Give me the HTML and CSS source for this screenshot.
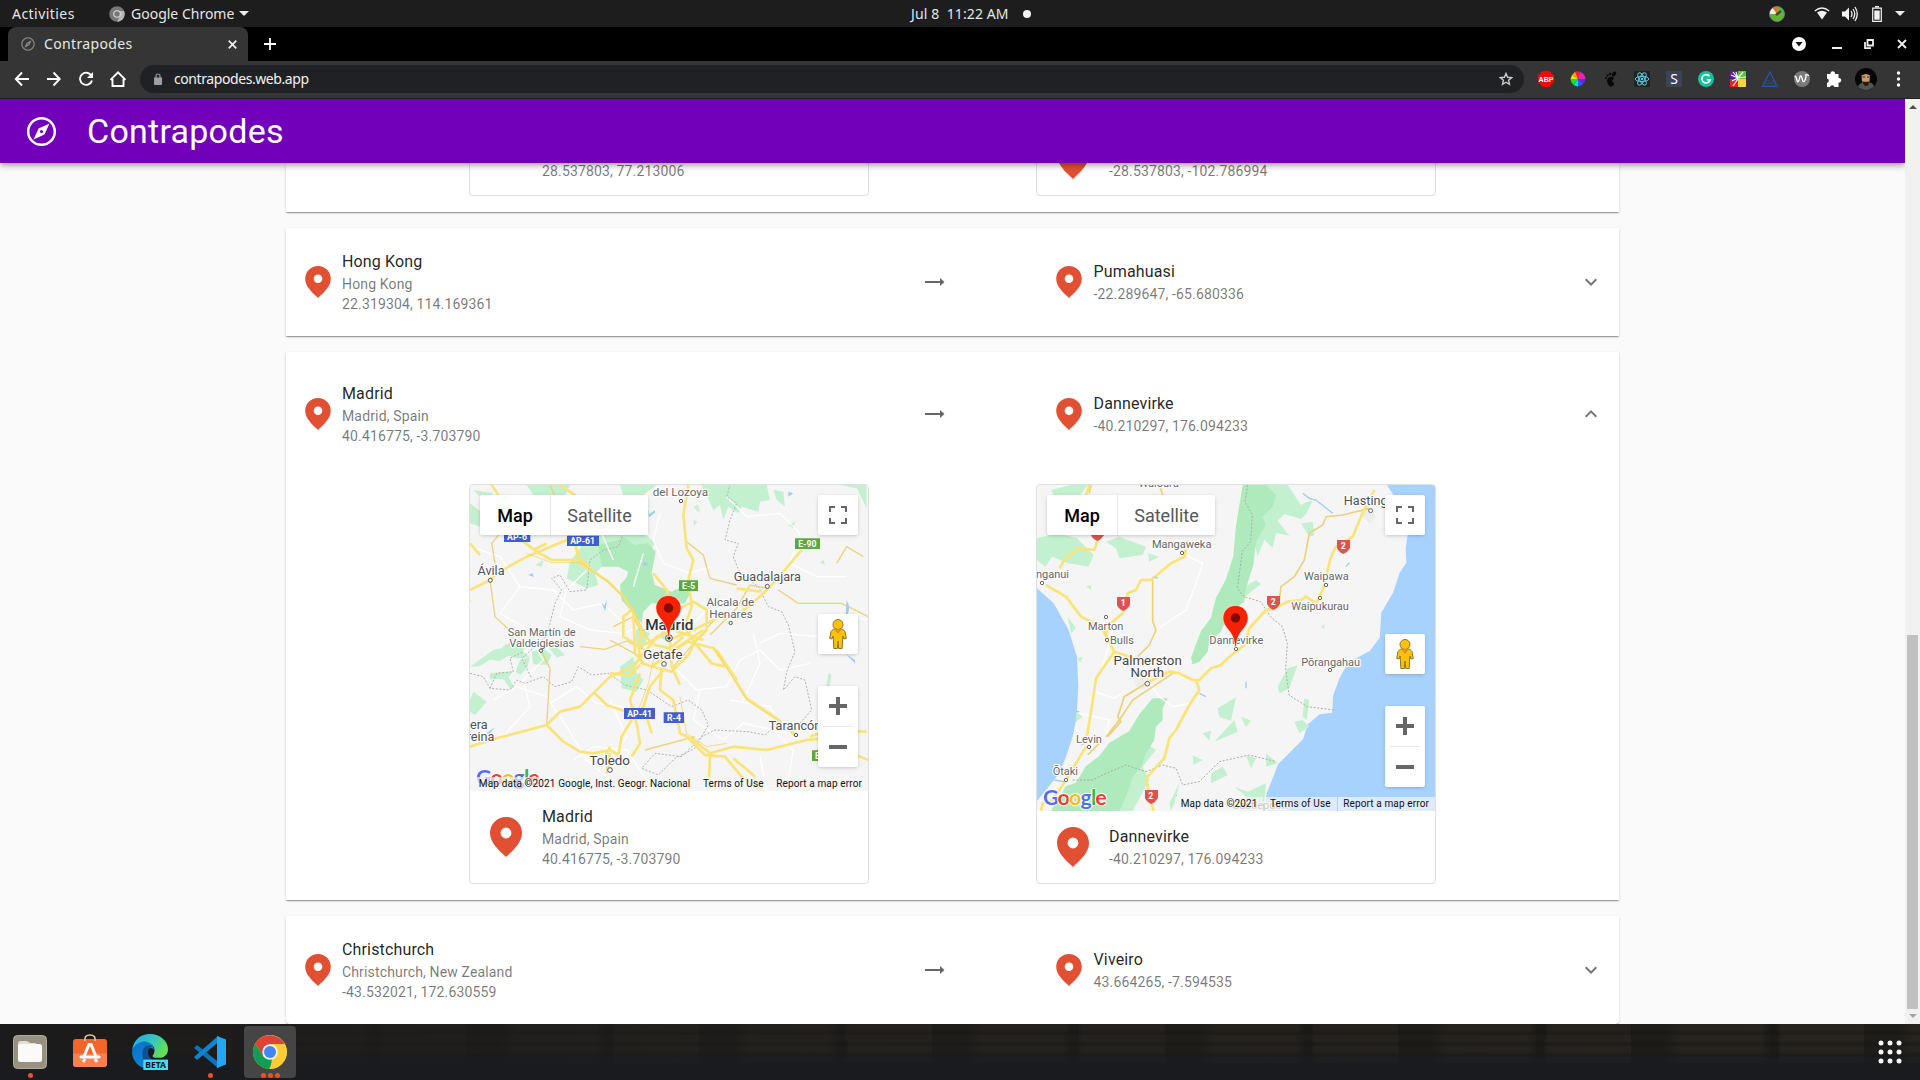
FILE: index.html
```html
<!DOCTYPE html>
<html lang="en">
<head>
<meta charset="utf-8">
<title>Contrapodes</title>
<link rel="stylesheet" href="styles.css">
</head>
<body>
<svg class="defs" width="0" height="0">
  <symbol id="pin" viewBox="0 0 32 40"><path fill="#e25033" fill-rule="evenodd" d="M16 0C7 0 0 7 0 16c0 9.500 8.500 17 16 24 7.500-7 16-14.500 16-24C32 7 25 0 16 0zm0 10.600a5.400 5.400 0 1 1 0 10.800 5.400 5.400 0 0 1 0-10.800z"/></symbol>
  <symbol id="arrow" viewBox="0 0 24 24"><path fill="#666" d="M2 11h15V8l4.500 4-4.500 4v-3H2z"/></symbol>
  <symbol id="more" viewBox="0 0 24 24"><path fill="#757575" d="M16.590 8.590L12 13.170 7.410 8.590 6 10l6 6 6-6z"/></symbol>
  <symbol id="compass" viewBox="0 0 24 24"><path fill="currentColor" d="M12 2C6.480 2 2 6.480 2 12s4.480 10 10 10 10-4.480 10-10S17.520 2 12 2zm0 18.300c-4.600 0-8.300-3.700-8.300-8.300S7.400 3.700 12 3.700s8.300 3.700 8.300 8.300-3.700 8.300-8.300 8.300z"/><path fill="currentColor" fill-rule="evenodd" d="M6.500 17.500l7.510-3.490L17.500 6.500 9.990 9.990 6.500 17.500zM12 10.900a1.100 1.100 0 1 1 0 2.200 1.100 1.100 0 0 1 0-2.200z"/></symbol>
  <symbol id="full" viewBox="0 0 18 18"><path fill="#666" d="M0 0v6h2V2h4V0H0zm16 0h-4v2h4v4h2V0h-2zm0 16h-4v2h6v-6h-2v4zM2 12H0v6h6v-2H2v-4z"/></symbol>
  <symbol id="pegman" viewBox="0 0 18 30"><g stroke="#8a7434" stroke-width="1"><path fill="#fbc206" d="M4.500 10h9l2.500 2.500 1.300 7-2.300.5-1.200-3-.6 12.500H9.700L9 22l-.7 7.500H4.800L4.200 17 3 20l-2.300-.5 1.300-7z"/><circle cx="9" cy="5.500" r="5" fill="#fbc206"/></g><path fill="#e58f1b" d="M5 10h8l-4 5z"/></symbol>
  <symbol id="marker" viewBox="0 0 27 43"><path fill="#f62302" stroke="#fff" stroke-width=".6" d="M13.500.5C6.200.5.900 6 .9 13c0 5 2.500 8.200 5.600 12 3.500 4.300 5.800 8.600 6.400 17h1.200c.6-8.400 2.900-12.700 6.400-17 3.100-3.800 5.600-7 5.600-12C26.100 6 20.800.5 13.500.5z"/><circle cx="13.500" cy="13" r="4.700" fill="#820b05"/></symbol>
</svg>

<div class="topbar">
  <span class="activities">Activities</span>
  <span class="app"><svg width="16" height="16" viewBox="0 0 16 16"><circle cx="8" cy="8" r="7.800" fill="#777"/><path fill="#b8b8b8" d="M15 5H8l3.200 5L8 15.800A7.800 7.800 0 0 0 15 5z"/><circle cx="8" cy="8" r="3.800" fill="#ddd"/><circle cx="8" cy="8" r="2.800" fill="#777"/></svg><span class="appname">Google Chrome</span><i class="caret"></i></span>
  <span class="clock">Jul 8&nbsp; 11:22 AM</span><i class="dot"></i>
  <div class="tray">
    <svg class="t-gauge" width="16" height="16" viewBox="0 0 16 16"><circle cx="8" cy="8" r="7.500" fill="#5db92f" stroke="#777"/><path fill="#eee" d="M8 8H1a7 7 0 0 1 3-6z"/><path fill="#f46a2a" d="M8 8L4 2.200A7 7 0 0 1 8 1z"/><path stroke="#444" stroke-width="2.500" d="M7 9l5-4"/></svg>
    <svg class="t-wifi" width="16" height="13" viewBox="0 0 16 13"><path fill="#f2f2f2" d="M3 5.500Q8 2 13 5.500L8 12.500z"/><path fill="none" stroke="#f2f2f2" stroke-width="1.300" d="M.8 4Q8-2 15.200 4"/></svg>
    <svg class="t-vol" width="16" height="16" viewBox="0 0 16 16"><path fill="#f2f2f2" d="M0 5.500h3L7 1.500v13l-4-4H0z"/><path fill="none" stroke="#f2f2f2" stroke-width="1.300" d="M9 5q2 3 0 6M11 3q3.500 5 0 10M13 1q4.500 7 0 14"/></svg>
    <svg class="t-bat" width="10" height="16" viewBox="0 0 10 16"><path fill="none" stroke="#f2f2f2" stroke-width="1.200" d="M.7 2.200h8.600v13.100H.7zM3 .7h4"/><path fill="#f2f2f2" d="M2.300 4.500h5.400v9.200H2.300z"/></svg>
    <i class="caret t-caret"></i>
  </div>
</div>

<div class="tabstrip">
  <div class="tab"><svg class="fav" width="16" height="16"><use href="#compass"/></svg><span>Contrapodes</span><svg class="close" width="9" height="9" viewBox="0 0 9 9"><path stroke="#eee" stroke-width="1.700" d="M.7.7l7.600 7.600M8.300.7L.7 8.300"/></svg></div>
  <svg class="newtab" width="12" height="12" viewBox="0 0 12 12"><path stroke="#fff" stroke-width="1.800" d="M6 0v12M0 6h12"/></svg>
  <svg class="wincontrols" width="116" height="14" viewBox="0 0 116 14"><circle cx="7" cy="7" r="7" fill="#fff"/><path fill="#111" d="M3.500 5h7L7 9.500z"/><path stroke="#eee" stroke-width="2" d="M40 11h10"/><path fill="none" stroke="#eee" stroke-width="1.800" d="M75.500 3h5.500v5.500h-5.500zM73 5v6.200h6"/><path stroke="#eee" stroke-width="1.900" d="M106 3l8 8M114 3l-8 8"/></svg>
</div>

<div class="toolbar">
  <svg class="nav" width="112" height="18" viewBox="0 0 112 18"><g fill="none" stroke="#fff" stroke-width="1.900"><path d="M15 9H2M8 2.500L1.800 9 8 15.500M33 9h13M39.500 2.500L45.700 9l-6.200 6.500M77.300 5.500A6.100 6.100 0 1 0 78 10.500M98.500 9v7h11V9M96.500 9.800L104 2.300l7.500 7.500"/></g><path fill="#fff" d="M79 2v6h-6z"/></svg>
  <div class="urlbar"><svg width="8" height="12" viewBox="0 0 8 12"><path fill="#9aa0a6" d="M0 4.500h8V11q0 1-1 1H1q-1 0-1-1z"/><path fill="none" stroke="#9aa0a6" stroke-width="1.200" d="M2 5V3a2 2 0 0 1 4 0v2"/></svg><span class="url">contrapodes.web.app</span><svg class="star" width="14" height="14" viewBox="0 0 14 14"><path fill="none" stroke="#ccc" stroke-width="1.400" d="M7 1.500l1.600 3.800 4.100.3-3.100 2.700.9 4L7 10.200l-3.500 2.100.9-4L1.300 5.600l4.100-.3z"/></svg></div>
  <svg class="ext" width="372" height="22" viewBox="0 0 372 22">
    <path fill="#ee0b0b" d="M6.700 3h6.600l4.700 4.600v6.500L13.300 19H6.700L2 14.100V7.600z"/><text class="abp" x="10" y="13.700">ABP</text>
    <path fill="#ff2020" d="M42 11l-3-7.300a8 8 0 0 1 5 0z"/><path fill="#ffa000" d="M42 11l-6-4 3-3.300z"/><path fill="#e8e600" d="M42 11l-7.500 0 1.500-4z"/><path fill="#20dd20" d="M42 11l-4.500 6a8 8 0 0 1-3-6z"/><path fill="#00dfcf" d="M42 11v7.500a8 8 0 0 1-4.500-1.500z"/><path fill="#2060f0" d="M42 11l5 5a8 8 0 0 1-5 2.500z"/><path fill="#7020f0" d="M42 11h7.500a8 8 0 0 1-2.500 5z"/><path fill="#f020c0" d="M42 11l2-7.300q5 2 5.500 7.300z"/>
    <g fill="#080808"><ellipse cx="78" cy="6" rx="2.800" ry="1.800" transform="rotate(-50 78 6)"/><circle cx="74" cy="6" r="1.300"/><circle cx="71.500" cy="7.500" r="1.100"/><circle cx="70" cy="10" r="1"/><path d="M77 9c-4-1-7 2-5.500 6 1.500 5 6 4 6.500 1 .3-2-2.500-2-2-3 .8-1.500 3-3 1-4z"/></g>
    <path fill="#222" d="M98 3h16v16H98z"/><g fill="none" stroke="#61c5e8"><ellipse cx="106" cy="11" rx="6.800" ry="2.600"/><ellipse cx="106" cy="11" rx="6.800" ry="2.600" transform="rotate(60 106 11)"/><ellipse cx="106" cy="11" rx="6.800" ry="2.600" transform="rotate(120 106 11)"/></g><circle cx="106" cy="11" r="1.300" fill="#61c5e8"/>
    <path fill="#3c4257" d="M130 3h16v16h-16z"/><text class="ext-s" x="138" y="16.300">S</text>
    <circle cx="170" cy="11" r="8" fill="#15c39a"/><path fill="none" stroke="#fff" stroke-width="1.600" d="M173.500 8.300a4.200 4.200 0 1 0 .7 3.500h-3.400"/>
    <path fill="#5a1e9c" d="M194 3h8v8h-8z"/><path fill="#5fc52e" d="M202 3h8v8h-8z"/><path fill="#ef1c1c" d="M194 11h8v8h-8z"/><path fill="#f4d63a" d="M202 11h8v8h-8z"/><path stroke="#fff" stroke-width="1.200" d="M202 10l-7-3M202 10l-2-6M202 10l5-6M202 10l8-1M202 11l-5 7M202 10l-6 3M197 4l4 5"/>
    <path fill="none" stroke="#2158b5" stroke-width="1.200" d="M234 4l-7.500 14H241zM226 18.300h13"/><circle cx="240.500" cy="17.500" r="1.400" fill="#353535" stroke="#2158b5"/><text class="clk" x="234" y="15.500">CLK</text>
    <circle cx="266" cy="11" r="8" fill="#7b7b7b"/><path fill="none" stroke="#fff" stroke-width="1.300" d="M258.500 8.500q1.500-1 2.200 3 1 4.500 2.600 0l.7-3q1.500-2 2.200 2.500 1 5 3 .5 1.500-3.500.5-4.500 2-1 3 1"/>
    <path fill="#fff" d="M291 6h3.500a2.300 2.300 0 1 1 4.500 0h3.500v4a2.300 2.300 0 1 1 0 4.500V19h-4a2.300 2.300 0 0 0-4.500 0H291v-4a2.300 2.300 0 0 0 0-4.500z"/>
    <circle cx="330" cy="11" r="11" fill="#050505"/><path fill="#50555c" d="M322 18.500q2-4 6-4h5q4 0 5 4a11 11 0 0 1-16 0z"/><path fill="#c89b6b" d="M325.500 7.500q4.500-3 8.500 0l-.5 6q-1 4-3.700 4t-3.800-4z"/><path fill="#2b1c12" d="M326 12.500q1 5.500 4 5.500t3.500-5.500q-1 1.500-2 1.200h-3.500q-1.200 0-2-1.200z"/><path stroke="#3a2618" d="M326.500 9h2.500M331 9h2.500"/>
    <g fill="#fff"><circle cx="362.500" cy="5" r="1.700"/><circle cx="362.500" cy="11" r="1.700"/><circle cx="362.500" cy="17" r="1.700"/></g>
  </svg>
</div>

<div class="viewport">
  <div class="page">
    <header class="appbar"><svg width="35" height="35"><use href="#compass"/></svg><h1>Contrapodes</h1></header>
    <main class="list">
      <section class="panel panel-cut">
        <div class="details">
          <article class="place cut"><footer class="foot"><div class="icon-gap"></div><div class="info"><p>28.537803, 77.213006</p></div></footer></article>
          <article class="place cut"><footer class="foot"><svg class="bigpin" width="32" height="40"><use href="#pin"/></svg><div class="info"><p>-28.537803, -102.786994</p></div></footer></article>
        </div>
      </section>

      <section class="panel">
        <div class="summary">
          <div class="from"><svg class="pin" width="26" height="32"><use href="#pin"/></svg><div class="info"><h2>Hong Kong</h2><p>Hong Kong</p><p>22.319304, 114.169361</p></div></div>
          <svg class="arrow" width="24" height="24"><use href="#arrow"/></svg>
          <div class="to"><svg class="pin" width="26" height="32"><use href="#pin"/></svg><div class="info"><h2>Pumahuasi</h2><p>-22.289647, -65.680336</p></div></div>
          <svg class="chev" width="24" height="24"><use href="#more"/></svg>
        </div>
      </section>

      <section class="panel">
        <div class="summary open">
          <div class="from"><svg class="pin" width="26" height="32"><use href="#pin"/></svg><div class="info"><h2>Madrid</h2><p>Madrid, Spain</p><p>40.416775, -3.703790</p></div></div>
          <svg class="arrow" width="24" height="24"><use href="#arrow"/></svg>
          <div class="to"><svg class="pin" width="26" height="32"><use href="#pin"/></svg><div class="info"><h2>Dannevirke</h2><p>-40.210297, 176.094233</p></div></div>
          <svg class="chev up" width="24" height="24"><use href="#more"/></svg>
        </div>
        <div class="details">
          <article class="place">
            <div class="map">
              <svg class="tiles" viewBox="30 45 1194 918">
                <g fill="#c3f1cf">
                  <path d="M725 45l35 75 20-15 10 45 15-40 30 20 10-20 50 15 5-30 30-5-10-45zM860 45l10 50 40-15 5-35zM940 60l30 5 5 45-25-20zM985 165l20-10-5 20zM700 110l15-5 5 25zM1140 45l50 10 30 60V45zM200 45l40 60 30 10 40-25 20-45zM480 45l20 60 70 30-20-60 40-30zM30 100l40 30-10 40-30-10zM40 60l60 10-20 30z"/>
                  <path d="M330 275l60-80h170l25 25-40 60-60-5-60 15-20 20 10 35-35 10-60-30z"/>
                  <path d="M480 590l40-30 10 50 20 20-20 35-45-10zM530 470l40 20-25 50-20-30z"/>
                  <path d="M30 590l70-50 25-5 12-14 18 10 20-10 22 8-8 16 20 16-35 4-30-8-25 16-30-4-30 20zM215 545l35-10 25 20-15 30-40-2zM265 530l30 5 20 20-25 8zM90 610l70-6-15 18 20 35-15-2-20-28-40 0zM30 690l10-25 40 30-35 40-15-10zM180 570l30-8-8 30-20 22-15-8zM1105 610l10 5-10 50-8-5zM600 500l30-10-5 30z"/>
                  <path d="M225 285l25-15-5 20zM1080 280l10-12 5 15zM700 150l12 5-10 12z"/>
                </g>
                <g fill="#aeeabb">
                  <path d="M415 225l80-20 30 20 40-5 22 25-12 65-50 10-35 30 15-45-30-15-50 0z"/>
                  <path d="M480 345l35-40 60 5 10 35 50 20 40-20 20 15-20 40-50 5-50-5-25 25-5 35-60-70z"/>
                </g>
                <g fill="none" stroke="#fff" stroke-width="4">
                  <path d="M30 230l90 30 60 90 100 10 60 60 90-20 60 60M180 350l-60 80 70 40 60 100-60 60 20 80-90 100M100 690l70-40 90 30 60 90 60 100 70 60M270 700l80-50 60 50 80 10M380 300l-60 60-20 80 90 40 100 10 50-20M600 130l-20 80 30 70 80 30 60-20M650 600l60 60 90-10 40-80 60-30 60 60 90-20M720 660l-20 90 90 60 60-50 90 20 60 60-20 120M800 80l60 60 100-10 60 60-30 90 80 40 90 0M900 520l60-30 120 10 60-70 80 20M850 690l50-110-20-90M680 480l60-60 90-10M450 690l50 110-40 60M340 870l60-40 100 10 60 90M900 860l20 100M980 800l-50-90-120-20M460 270l-40-90 60-80M550 250l-30 100"/>
                </g>
                <g fill="none" stroke="#b0b0b0" stroke-width="3" stroke-dasharray="6 5">
                  <path d="M30 610l40 10 20 35 60 5 20-30 25 10 55-20 35 30 50-15 20-45 40 25 50-5 50 35 65 15 75 50 50-20 40 30 20 45-40 70-60 30-50 50-50-20 40-45 80 10 60-60 40-20 100 5 50 10 40-35 60 5 40-45-20-90-30-10-35 40 10-55 25-60-20-80-20-40-40-15-30-60-55-40-20-50 15-40-40-10 15-60 20-50-30-20 20-70M490 190l-15 40-45 10-40 30-10 90-50 5-30-50-25 10 30 35-20 40-25 100-30 25-45 40 30 60M90 655l20-45 50-5-10-40 40-20"/>
                </g>
                <g fill="none" stroke="#edd17b" stroke-width="4"><path d="M90 330l15 110 55 50-15 40M105 280l-10-60 25-30M1130 280l30-50 50 30M270 45l30 70M600 480h-60l-20-40-60 30M360 530l75 8 65-25 60 30M245 545l25 50-10 170M680 215l50 40 20 70 80 20M540 560l-90-50M705 800l-150 40M955 360l60 40 130 0 80 40M920 355l-50-10-40 70-80 80M640 590l140-160"/></g>
                <g fill="none" stroke="#fae377" stroke-width="8" stroke-linejoin="round">
                  <path d="M30 360l60-30 20-20 90-50 120-50 30-50M170 200l60 45 45 25 90 0 30 30 50 35 50 50 30 50 25 60 35 30 45 10 40-35M260 220l-40 20M345 220l15 60 30 20M1025 240l-80 95-40 40-60 50-75 20-70 35-75 30M30 830l80-25 150-40 40-40 60-15 40-40 50-50 70-30 70-90 40-15M260 765l50 50 50 30 40 5 50-10 25 15M475 855l10-55 30-50 35-40 20-60 40-50M515 860l25-40-10-60-20-70 30-80M560 740l15 50M450 610l60 5 30-30M405 670l35 35 60 20M630 510l5 80 25 55M605 600l-5 60 40 30 20 100 40 20 50 40 70-20 100 10 120-30 50-5 60 35 100 40M675 795l60 60 60 5 50 60 60 45M750 860l-5 100M820 865l60 50 30 50M1010 800l-60-55-90-60-50-80-50-70-75-20-50 30-60 45M770 540l60 90M685 45l-15 90 10 100 20 35-15 60 10 80-20 60 30 50 50 60 40 10M580 310l40 50 10 40 10 40-40 60-60 30-50-30 0-60 30-25M545 480l-10 50 10 50 50 15 40 10 50-50 20-40 35-35 0-60-40-25-60 30-30 60M520 430l5 120 30 35M640 480l90 30M610 560l120-80M450 850l-10 60M900 365l-70-10M30 220l30 35M1220 785l-120-5-50 20M30 390l-10 20M95 45l20 30M300 45l60 40M420 890l30-60"/>
                </g>
                <g fill="none" stroke="#efd05f" stroke-width="2"><path d="M200 250l75 28 90 0 35 28 50 35 50 50 30 50 30 60M660 680l20 110 60 40 60-10M580 570l-15 70-30 80M760 530l50 80 50 80 90 60"/></g>
                <path fill="#9fcaff" d="M565 135l20-15v8l-18 14zM545 285l10-10 10 12zM423 395l10 12 8-18-5 35zM1160 390l8 20-8 50-4-10zM1155 550l30 20v10zM985 65l15 5-15 10zM78 790l28-18-18 20zM205 315l12-6 4 12zM1040 367l20 25zM308 900l10 12z"/>
                <g class="city mid"><text x="661" y="77" class="w">del Lozoya</text><text x="93" y="316" class="c2">Ávila</text><text x="922" y="334" class="c2">Guadalajara</text><text x="811" y="408" class="w">Alcala de</text><text x="813" y="444" class="w">Henares</text><text x="245" y="497">San Martín de</text><text x="245" y="530">Valdeiglesias</text><text x="609" y="566" class="c3">Getafe</text><text x="449" y="884" class="c3">Toledo</text><text x="1005" y="780" class="c2">Tarancón</text></g>
                <g class="city c2"><text x="30" y="776">era</text><text x="20" y="814">reina</text></g>
                <g fill="#fff" stroke="#555" stroke-width="3"><circle cx="663" cy="93" r="5"/><circle cx="91" cy="331" r="6"/><circle cx="922" cy="349" r="6"/><circle cx="812" cy="459" r="5"/><circle cx="243" cy="542" r="5"/><circle cx="612" cy="582" r="7"/><circle cx="450" cy="900" r="7"/><circle cx="1008" cy="795" r="5"/><circle cx="627" cy="504" r="10"/></g><circle cx="627" cy="504" r="5" fill="#222"/>
                <text class="capital" x="628" y="480">Madrid</text>
                <g fill="#4160cb"><path d="M132 185h79v31h-79zM321 197h96v31h-96zM492 714h93v33h-93zM611 727h61v32h-61z"/></g>
                <g fill="#5caa3c"><path d="M1005 205h75v32h-75zM657 331h57v32h-57zM1056 841h60v32h-60z"/></g>
                <g class="shield"><text x="171" y="211">AP-6</text><text x="368" y="222">AP-61</text><text x="539" y="740">AP-41</text><text x="642" y="753">R-4</text><text x="1042" y="231">E-90</text><text x="686" y="357">E-5</text><text x="1072" y="867">E</text></g>
              </svg>
              <svg class="marker mk1" width="27" height="43"><use href="#marker"/></svg>
              <div class="types"><b>Map</b><span>Satellite</span></div>
              <div class="ctl fs"><svg width="18" height="18"><use href="#full"/></svg></div>
              <div class="ctl peg"><svg width="18" height="30"><use href="#pegman"/></svg></div>
              <div class="zoombox"><i class="plus"></i><hr><i class="minus"></i></div>
              <div class="logo"><span class="gb">G</span><span class="gr">o</span><span class="gy">o</span><span class="gb">g</span><span class="gg">l</span><span class="gr">e</span></div>
              <div class="attrib"><span>Map data ©2021 Google, Inst. Geogr. Nacional</span><span>Terms of Use</span><span>Report a map error</span></div>
            </div>
            <footer class="foot"><svg class="bigpin" width="32" height="40"><use href="#pin"/></svg><div class="info"><h2>Madrid</h2><p>Madrid, Spain</p><p>40.416775, -3.703790</p></div></footer>
          </article>

          <article class="place">
            <div class="map">
              <svg class="tiles" viewBox="33 45 1194 978">
                <path fill="#a8d2fe" d="M1083 45h144v978H718l3-50 35-90 75-75 15-45 35-30 38-5 2-50 20-55 25-45 65-35 30-40 5-75 35-60 20-60 20-30-2-45 8-50-8-60-35-45zM33 355l50 45 45 80 25 80 4 90-5 90-12 60-20 60-20 50-32 40-45 55z"/>
                <g fill="#c3f1cf">
                  <path d="M650 45h135l40 60 15-8 20-5-20 40-15 15-50-15-20 20 35 45-40-8-10 45-25-25-20 50-10-40-35 20zM33 205l60-15 60 15 50 50-15 35-60-10-50-20-20 30-25-20zM240 215l40-15 80 30-10 25-70 10-10-30zM365 250l35 10-30 15zM75 60l60-15h50l-30 40-60 10zM125 440l25 35-15 15zM180 350l15-5v15z"/>
                  <path d="M825 160l35-5 5 40-15 5zM755 650l30-55 30-10-25 70-30 15zM575 715l55-33-15 70-35-10zM625 750l10 35-70 30zM645 740l30 12-15 20zM530 790l25-8-5 30zM500 855l30 15-28 15zM555 910l35-20 15 25-50 25zM835 685l15 5-8 60-12-10zM805 755l25-5 20 20-30 20zM660 855l30 10-15 30zM720 850l35 30-35 10zM625 950l40 15 55-25-5 60-50 5-10-30zM430 1000l30-60-10 50-15 33zM150 725l20 15-20 15zM155 565l15-5-8 20zM640 1000l50-15-10 38h-40zM885 470l10-8v15zM640 360l50-30 15 12-50 40zM360 820l30 20-40 50 20 40-50 93h-60l60-120z"/>
                </g>
                <g fill="#aeeabb"><path d="M650 45h70l30 30-10 35-30 30 10 25-30 50-8 70-22 70-5 40-50 40-20 50-35 30-5 30-25 30-20 8-5-20 30-80 30-40 15-60 30-55 22-70 8-90zM380 685l45 0-15 30 0 35-20 20-5 40-25 40-15 40-25 30-20 60-20 43H75l45-75 30-10 30-50 40-30 30-40 60-35 30-50z"/></g>
                <path fill="#ededed" d="M330 610l40 5-5 35-25 10-15-20zM1000 130l30-15 20 25-20 20z"/>
                <g fill="none" stroke="#fff" stroke-width="4"><path d="M470 250l60 30-20 60-30 80-90 60M370 640l30 40 40 30 50-10M205 665l60 20 30-20M160 730l90 20-10 50M260 480l-30 110"/></g>
                <g fill="none" stroke="#aaa" stroke-width="3" stroke-dasharray="6 5"><path d="M665 45l-8 50 22 40-5 80-25 30-15 110 20 25 50 15 30 45 35 30 15 50-5 75 10 80 55 35 80 10M140 930l60 0 40-20 60-25 60 20 50-20 40 10 20 50 50-10 60-60 90-20 80 20"/></g>
                <g fill="none" stroke="#edd17b" stroke-width="5"><path d="M1030 115l-80 20-50 5-10 25-40 25-15 80-30 50-40 30-5 40M380 330l0 125 10 25-20 45-35 35M360 640l-65 40-20 60 10 15-40 45M440 610l-120 80-40 60-40 50M190 70l5-25M220 820l-35 35M400 45l10 30"/></g>
                <g fill="none" stroke="#fae377" stroke-width="8" stroke-linejoin="round"><path d="M60 345l60 35 45 60 60 30 40 75-55 80-15 100-15 90M265 545l60 20M360 640l70-35 30 5 40 20h20l35-35 30-10 20-20 50-40 15-50 50-55 25-5 40-20 40-5 15-10 30 20 20-40 25-100 15-30 50-30 25-60 40-80M510 630l10 30-30 45-40 75-20 25-15 60-55 60 15 70 8 30M100 295l15-25 40-35 50 5 10-30M485 210l-10 50-40 20-60 50-30 0-15 30-25 10-15 60-35 30-15 30 5 30M180 830l-60 100-40 60-30 10-5 23M190 45l-10 30"/></g>
                <path fill="none" stroke="#9fcaff" stroke-width="4" d="M830 70l20 15 20 5 50 40M520 670l20 10M660 635v20M960 290l10-12M165 825l10-5M385 320l10 5M150 725h10M85 930l30 5"/>
                <g class="city mid"><text x="398" y="50">Waiouru</text><text x="1029" y="106" class="c2">Hastings</text><text x="467" y="233">Mangaweka</text><text x="901" y="329">Waipawa</text><text x="882" y="419">Waipukurau</text><text x="239" y="479">Marton</text><text x="288" y="521">Bulls</text><text x="365" y="584" class="c3">Palmerston</text><text x="364" y="622" class="c3">North</text><text x="631" y="521">Dannevirke</text><text x="914" y="587">Pōrangahau</text><text x="189" y="818">Levin</text><text x="118" y="916">Ōtaki</text><text x="702" y="1018">Castlepoint</text></g>
                <g class="city"><text x="30" y="323">nganui</text></g>
                <g fill="#fff" stroke="#666" stroke-width="3"><circle cx="1034" cy="122" r="6"/><circle cx="468" cy="249" r="5"/><circle cx="48" cy="339" r="5"/><circle cx="900" cy="345" r="5"/><circle cx="882" cy="384" r="5"/><circle cx="240" cy="441" r="5"/><circle cx="243" cy="510" r="5"/><circle cx="364" cy="641" r="7"/><circle cx="630" cy="537" r="5"/><circle cx="912" cy="600" r="5"/><circle cx="189" cy="831" r="5"/><circle cx="120" cy="930" r="5"/></g>
                <g fill="#dc5450"><path id="nz" d="M273 381h39v24q-6 12-20 18-14-6-19-18z"/><use href="#nz" x="-78" y="-210"/><use href="#nz" x="660" y="-171"/><use href="#nz" x="450" y="-3"/><use href="#nz" x="84" y="579"/></g>
                <g class="shield"><text x="292" y="408">1</text><text x="952" y="237">2</text><text x="742" y="405">2</text><text x="374" y="987">2</text></g>
              </svg>
              <svg class="marker mk2" width="27" height="43"><use href="#marker"/></svg>
              <div class="types"><b>Map</b><span>Satellite</span></div>
              <div class="ctl fs"><svg width="18" height="18"><use href="#full"/></svg></div>
              <div class="ctl peg"><svg width="18" height="30"><use href="#pegman"/></svg></div>
              <div class="zoombox"><i class="plus"></i><hr><i class="minus"></i></div>
              <div class="logo"><span class="gb">G</span><span class="gr">o</span><span class="gy">o</span><span class="gb">g</span><span class="gg">l</span><span class="gr">e</span></div>
              <div class="attrib"><span>Map data ©2021</span><span>Terms of Use</span><span>Report a map error</span></div>
            </div>
            <footer class="foot"><svg class="bigpin" width="32" height="40"><use href="#pin"/></svg><div class="info"><h2>Dannevirke</h2><p>-40.210297, 176.094233</p></div></footer>
          </article>
        </div>
      </section>

      <section class="panel last">
        <div class="summary">
          <div class="from"><svg class="pin" width="26" height="32"><use href="#pin"/></svg><div class="info"><h2>Christchurch</h2><p>Christchurch, New Zealand</p><p>-43.532021, 172.630559</p></div></div>
          <svg class="arrow" width="24" height="24"><use href="#arrow"/></svg>
          <div class="to"><svg class="pin" width="26" height="32"><use href="#pin"/></svg><div class="info"><h2>Viveiro</h2><p>43.664265, -7.594535</p></div></div>
          <svg class="chev" width="24" height="24"><use href="#more"/></svg>
        </div>
      </section>
    </main>
  </div>
  <div class="scrollbar"><i class="sb-up"></i><div class="thumb"></div><i class="sb-down"></i></div>
</div>

<div class="dock">
  <div class="slot"><svg width="34" height="34" viewBox="0 0 34 34"><rect x=".5" y=".5" width="33" height="33" rx="4" fill="#989180" stroke="#b3ad9e"/><path fill="#e2dfd8" d="M5 9q0-3 3-3h6l3 2h6v8H5z"/><rect x="5" y="9" width="24" height="18" rx="2.500" fill="#fbfaf8"/></svg><span class="run"><i></i></span></div>
  <div class="slot"><svg class="store" width="34" height="34" viewBox="0 0 34 34"><rect y="5" width="34" height="28" rx="3" fill="#f2652c"/><path fill="#f78152" d="M0 19.500h34V30a3 3 0 0 1-3 3H3a3 3 0 0 1-3-3z"/><path fill="none" stroke="#d8c79f" stroke-width="1.700" d="M12 7q-1-6 5-6t5 6"/><path fill="none" stroke="#fff" stroke-width="3" d="M11 22.500l5-12h2l5 12M12 25l-2 3M22 25l2 3"/><path stroke="#fff" stroke-width="3" stroke-linecap="round" d="M8 23h18"/></svg></div>
  <div class="slot"><svg class="edge" width="36" height="36" viewBox="0 0 38 38"><defs><linearGradient id="e1" x2="1" y2=".4"><stop stop-color="#21a6e5"/><stop offset=".6" stop-color="#34c6c0"/><stop offset="1" stop-color="#63df52"/></linearGradient><linearGradient id="e2" y2="1"><stop stop-color="#0c6ec5"/><stop offset="1" stop-color="#1192e5"/></linearGradient></defs><path fill="url(#e2)" d="M0 18Q3 6 14 8q8 1 9 8-5-3-7 2 0 9 10 12l8-1q-6 8-15 8A18.500 18.500 0 0 1 0 18z"/><path fill="#0b4f94" d="M12 16q3-6 10-3-6 2-5 8 2 8 12 9-4 5-10 4-11-7-7-18z"/><path fill="url(#e1)" d="M0 17C2 5 10 0 19 0c11 0 19 8 19 16 0 7-6 10-12 9-5 0-5-2-3-4 3-7-3-13-11-13Q4 9 0 17z"/><path fill="#44dcf7" d="M12 27h26v11H12z"/><text class="beta" x="25" y="36">BETA</text></svg></div>
  <div class="slot"><svg width="32" height="32" viewBox="0 0 32 32"><path fill="#0b72bb" d="M0 12l3-3L27 28l-3 4z"/><path fill="#0c86cf" d="M0 21l3 3L27 4l-3-4z"/><path fill="#27a5f0" d="M23 0l9 3.500v25L23 32V10z"/></svg><span class="run"><i></i></span></div>
  <div class="slot active"><svg width="34" height="34" viewBox="0 0 34 34"><circle cx="17" cy="17" r="17" fill="#fc3"/><path fill="#dc4437" d="M2.300 8.500A17 17 0 0 1 31.700 9H17L9.500 21z"/><path fill="#109d58" d="M2.300 8.500L10 21.500l9 3L17 34A17 17 0 0 1 2.300 8.500z"/><path fill="#fc3" d="M17 9h14.700A17 17 0 0 1 16 34l8.500-12z"/><circle cx="17" cy="17" r="7.700" fill="#f3f3f3"/><circle cx="17" cy="17" r="6" fill="#4285f4"/></svg><span class="run"><i></i><i></i><i></i></span></div>
  <svg class="grid" width="24" height="24" viewBox="0 0 24 24"><g fill="#f6f6f6"><circle cx="3" cy="3" r="2.500"/><circle cx="12" cy="3" r="2.500"/><circle cx="21" cy="3" r="2.500"/><circle cx="3" cy="12" r="2.500"/><circle cx="12" cy="12" r="2.500"/><circle cx="21" cy="12" r="2.500"/><circle cx="3" cy="21" r="2.500"/><circle cx="12" cy="21" r="2.500"/><circle cx="21" cy="21" r="2.500"/></g></svg>
</div>
</body>
</html>
```
FILE: styles.css
```css
* { box-sizing: border-box; }
body { margin: 0; width: 1920px; height: 1080px; overflow: hidden; display: flex; flex-direction: column; background: #fafafa; font-family: Roboto, sans-serif; }
svg { display: block; flex: none; }
i { display: block; }
h1, h2, p { margin: 0; font-weight: 400; }
.defs { position: absolute; }

/* desktop bar */
.topbar { height: 27px; flex: none; background: #1d1d1d; color: #e6e6e6; font: 14px/27px "Noto Sans", sans-serif; display: grid; grid-template-columns: 109px 802px auto 12px 1fr; align-items: center; }
.activities { padding-left: 12px; letter-spacing: .45px; }
.app { display: flex; align-items: center; }
.appname { margin-left: 6px; }
.caret { border: 5px solid transparent; border-top-color: #eee; border-bottom: 0; margin-left: 5px; }
.clock { white-space: nowrap; font-size: 14px; letter-spacing: .1px; }
.dot { width: 8px; height: 8px; border-radius: 50%; background: #f2f2f2; margin-left: 14px; }
.tray { display: flex; justify-content: flex-end; align-items: center; padding-right: 15px; }
.t-gauge { margin-right: 29px; }
.t-wifi { margin-right: 12px; }
.t-vol { margin-right: 14px; }
.t-caret { margin-left: 13px; }

/* browser frame */
.tabstrip { height: 34px; flex: none; background: #000; display: flex; align-items: center; padding-left: 8px; }
.tab { width: 240px; height: 34px; background: #353535; border-radius: 8px 8px 0 0; display: flex; align-items: center; padding: 0 11px 0 12px; color: #e8e8e8; font: 14px "Noto Sans", sans-serif; letter-spacing: .35px; }
.tab span { flex: 1; margin: -2px 0 0 8px; }
.fav { color: #8b8b8b; }
.newtab { margin-left: 16px; }
.wincontrols { margin-left: auto; margin-right: 12px; }
.toolbar { height: 38px; flex: none; background: #353535; border-bottom: 1px solid #222; display: flex; align-items: center; padding: 0 0 1px 14px; }
.urlbar { width: 1384px; height: 28px; border-radius: 14px; background: #202124; margin-left: 14px; display: flex; align-items: center; padding: 0 11px 0 14px; }
.url { flex: 1; margin: -2px 0 0 12px; color: #f2f2f2; font: 14px "Noto Sans", sans-serif; letter-spacing: -.42px; }
.ext { margin-left: 12px; }
.abp { font: bold 7px "Liberation Sans", sans-serif; fill: #fff; text-anchor: middle; }
.ext-s { font: 14px "Noto Sans", sans-serif; fill: #fff; text-anchor: middle; }
.clk { font: 5px "Liberation Sans", sans-serif; fill: #2158b5; text-anchor: middle; }

/* page */
.viewport { height: 925px; flex: none; display: flex; overflow: hidden; }
.page { width: 1905px; overflow: hidden; }
.appbar { position: relative; z-index: 2; height: 64px; background: #7200ba; color: #fff; display: flex; align-items: center; padding-left: 24px; gap: 28px; box-shadow: 0 2px 4px -1px rgba(0,0,0,.2), 0 4px 5px rgba(0,0,0,.14), 0 1px 10px rgba(0,0,0,.12); }
.appbar h1 { font-size: 34px; line-height: 42px; letter-spacing: .25px; }
.list { width: 1333px; margin: 0 auto; display: flex; flex-direction: column; gap: 16px; }
.panel { background: #fff; box-shadow: 0 2px 1px -1px rgba(0,0,0,.2), 0 1px 1px rgba(0,0,0,.14), 0 1px 3px rgba(0,0,0,.12); }
.last { border-radius: 0 0 4px 4px; }
.summary { height: 108px; display: grid; grid-template-columns: 618px 133px 1fr 24px; align-items: center; padding: 0 16px 0 19px; }
.open { height: 124px; }
.from, .to { display: flex; align-items: center; gap: 11px; }
.to { gap: 11.500px; }
.info h2 { font-size: 16px; line-height: 24px; letter-spacing: .15px; color: rgba(0,0,0,.87); }
.info p { font-size: 14px; line-height: 20px; letter-spacing: .15px; color: rgba(0,0,0,.54); }
.up { transform: rotate(180deg); }
.details { display: flex; justify-content: space-between; padding: 8px 183px 16px; }
.place { width: 400px; height: 400px; border: 1px solid #dfdfdf; border-radius: 4px; overflow: hidden; display: flex; flex-direction: column; }
.foot { flex: none; display: flex; align-items: center; padding: 14px 20px; gap: 20px; }
.panel-cut { height: 49px; }
.panel-cut .details { padding-top: 0; }
.cut { height: 33px; border-top: 0; border-radius: 0 0 4px 4px; justify-content: flex-end; }
.cut .foot { height: 72px; }
.cut .info { align-self: flex-end; }
.icon-gap { width: 32px; }

/* map */
.map { position: relative; flex: 1; min-height: 0; background: #f5f5f5; overflow: hidden; }
.tiles { width: 100%; height: 100%; }
.city { font: 33px Roboto, sans-serif; fill: #666; stroke: #fff; stroke-width: 7px; paint-order: stroke; stroke-linejoin: round; }
.mid { text-anchor: middle; }
.w { font-size: 35px; }
.c2 { font-size: 38px; fill: #505050; }
.c3 { font-size: 40px; fill: #444; }
.capital { font: 500 46px Roboto, sans-serif; fill: #333; stroke: #fff; stroke-width: 7px; paint-order: stroke; text-anchor: middle; }
.shield { font: bold 26px Roboto, sans-serif; fill: #fff; text-anchor: middle; }
.marker { position: absolute; left: 185px; }
.mk1 { top: 110px; }
.mk2 { top: 120px; }
.types, .ctl, .zoombox { position: absolute; background: #fff; border-radius: 2px; box-shadow: 0 1px 4px -1px rgba(0,0,0,.3); }
.types { left: 10px; top: 10px; height: 40px; display: flex; font-size: 18px; line-height: 41px; text-align: center; }
.types b { width: 70px; font-weight: 500; color: #000; }
.types span { width: 98px; color: #565656; border-left: 1px solid #e8e8e8; }
.ctl { right: 10px; width: 40px; height: 40px; display: grid; place-items: center; }
.fs { top: 10px; }
.peg { bottom: 137px; }
.zoombox { right: 10px; bottom: 24px; width: 40px; height: 81px; display: grid; grid-template-rows: 40px 1px 40px; place-items: center; }
.zoombox hr { width: 30px; height: 1px; margin: 0; border: 0; background: #e6e6e6; }
.plus { width: 18px; height: 18px; background: linear-gradient(#666, #666) center / 18px 4px no-repeat, linear-gradient(#666, #666) center / 4px 18px no-repeat; }
.minus { width: 18px; height: 4px; background: #666; }
.logo { position: absolute; left: 6px; bottom: 1px; font: 700 21.500px/26px Lato, sans-serif; letter-spacing: -.9px; text-shadow: 0 0 1px #fff, 1px 0 1px #fff, -1px 0 1px #fff, 0 1px 1px #fff, 0 -1px 1px #fff; }
.gb { color: #5070f0; } .gr { color: #ee3f30; } .gy { color: #f9bc15; } .gg { color: #32b45a; }
.attrib { position: absolute; right: 0; bottom: 0; height: 14px; display: flex; font-size: 10px; line-height: 14px; letter-spacing: .13px; color: #111; }
.attrib span { background: rgba(245,245,245,.7); padding: 0 6px 0 5.500px; white-space: nowrap; margin-left: 1px; }

/* scrollbar */
.scrollbar { width: 15px; background: #f1f1f1; display: flex; flex-direction: column; align-items: center; }
.thumb { width: 11px; height: 374px; background: #c1c1c1; margin-top: auto; }
.sb-up, .sb-down { border: 4px solid transparent; }
.sb-up { border-top: 0; border-bottom-color: #505050; margin-top: 6px; }
.sb-down { border-bottom: 0; border-top-color: #a3a3a3; margin: 5px 0 6px; }

/* dock */
.dock { height: 56px; flex: none; display: flex; align-items: center; padding: 0 18px 0 4px; gap: 8px; background: linear-gradient(rgba(26,27,31,0) 45%, #1a1b1f 78%), linear-gradient(90deg, #1c1b1b, rgba(30,28,26,.5) 40%, rgba(30,27,24,.2)), repeating-linear-gradient(91deg, rgba(20,19,18,.5) 0 34px, rgba(44,40,35,.1) 50px 130px, rgba(16,15,15,.5) 140px 146px, rgba(40,36,32,.15) 150px 233px), repeating-linear-gradient(#292621 0 6px, #1f1d1a 8px 11px); }
.slot { position: relative; width: 52px; height: 52px; display: grid; place-items: center; border-radius: 4px; }
.store { margin-top: -3px; }
.active { background: #454545; }
.run { position: absolute; bottom: 0; left: 0; right: 0; display: flex; justify-content: center; gap: 2px; }
.run i { width: 5px; height: 5px; border-radius: 50%; background: #e95420; }
.beta { font: bold 9px "Noto Sans", sans-serif; text-anchor: middle; fill: #111; }
.grid { margin-left: auto; }
```
